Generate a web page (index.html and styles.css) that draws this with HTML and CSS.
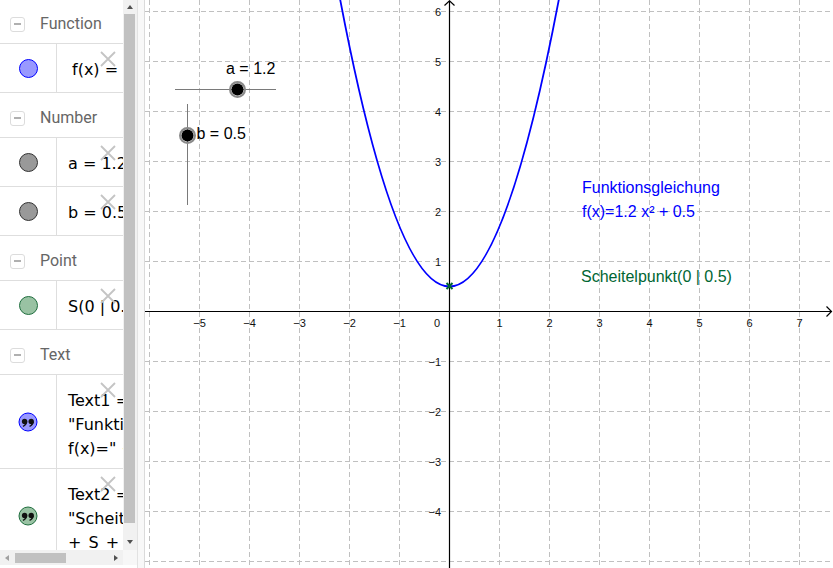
FILE: index.html
```html
<!DOCTYPE html>
<html lang="de">
<head>
<meta charset="utf-8">
<title>GeoGebra</title>
<link rel="stylesheet" href="styles.css">
</head>
<body>
<div class="app">
  <div class="algebra">
    <div class="av-top">
      <div class="av-list">
        <div class="hdr first"><span class="toggle"><span class="minus"></span></span><span class="hdr-text">Function</span></div>
        <div class="item">
          <div class="marble-cell"><span class="marble m-blue"></span></div>
          <div class="expr fx">f(x) = 1.2x² + 0.5</div>
          <svg class="del" viewBox="0 0 16 16"><path d="M1 1L15 15M15 1L1 15"/></svg>
        </div>
        <div class="hdr"><span class="toggle"><span class="minus"></span></span><span class="hdr-text">Number</span></div>
        <div class="item">
          <div class="marble-cell"><span class="marble m-gray"></span></div>
          <div class="expr">a = 1.2</div>
          <svg class="del" viewBox="0 0 16 16"><path d="M1 1L15 15M15 1L1 15"/></svg>
        </div>
        <div class="item">
          <div class="marble-cell"><span class="marble m-gray"></span></div>
          <div class="expr">b = 0.5</div>
          <svg class="del" viewBox="0 0 16 16"><path d="M1 1L15 15M15 1L1 15"/></svg>
        </div>
        <div class="hdr"><span class="toggle"><span class="minus"></span></span><span class="hdr-text">Point</span></div>
        <div class="item">
          <div class="marble-cell"><span class="marble m-green"></span></div>
          <div class="expr">S(0 | 0.5)</div>
          <svg class="del" viewBox="0 0 16 16"><path d="M1 1L15 15M15 1L1 15"/></svg>
        </div>
        <div class="hdr"><span class="toggle"><span class="minus"></span></span><span class="hdr-text">Text</span></div>
        <div class="item tall">
          <div class="marble-cell">
            <svg class="qmarble" viewBox="0 0 20 20"><circle class="q-blue" cx="10" cy="10" r="9"/><g class="quotes"><circle cx="6.6" cy="9.4" r="2.7"/><path d="M9.3 9.6C9.2 12.2 7.8 14 5.2 14.9L4.7 13.8C6.2 13.1 7 12.1 7.1 10.8Z"/><circle cx="13.2" cy="9.4" r="2.7"/><path d="M15.9 9.6C15.8 12.2 14.4 14 11.8 14.9L11.3 13.8C12.8 13.1 13.6 12.1 13.7 10.8Z"/></g></svg>
          </div>
          <div class="expr">
            <div>Text1 =</div>
            <div>"Funktionsgleichung</div>
            <div>f(x)=" + f</div>
          </div>
          <svg class="del" viewBox="0 0 16 16"><path d="M1 1L15 15M15 1L1 15"/></svg>
        </div>
        <div class="item tall">
          <div class="marble-cell">
            <svg class="qmarble" viewBox="0 0 20 20"><circle class="q-green" cx="10" cy="10" r="9"/><g class="quotes"><circle cx="6.6" cy="9.4" r="2.7"/><path d="M9.3 9.6C9.2 12.2 7.8 14 5.2 14.9L4.7 13.8C6.2 13.1 7 12.1 7.1 10.8Z"/><circle cx="13.2" cy="9.4" r="2.7"/><path d="M15.9 9.6C15.8 12.2 14.4 14 11.8 14.9L11.3 13.8C12.8 13.1 13.6 12.1 13.7 10.8Z"/></g></svg>
          </div>
          <div class="expr">
            <div>Text2 =</div>
            <div>"Scheitelpunkt"</div>
            <div class="wide">+ S + ""</div>
          </div>
          <svg class="del" viewBox="0 0 16 16"><path d="M1 1L15 15M15 1L1 15"/></svg>
        </div>
      </div>
      <div class="vscroll">
        <div class="sbtn"><span class="tri tri-up"></span></div>
        <div class="vtrack"><div class="vthumb"></div></div>
        <div class="sbtn"><span class="tri tri-down"></span></div>
      </div>
    </div>
    <div class="av-bottom">
      <div class="hscroll">
        <div class="sbtn hbtn"><span class="tri tri-left"></span></div>
        <div class="htrack"><div class="hthumb"></div></div>
        <div class="sbtn hbtn"><span class="tri tri-right"></span></div>
      </div>
      <div class="corner"></div>
    </div>
  </div>
  <div class="splitter"></div>
  <div class="graphics">
    <svg class="plot" width="688" height="568" viewBox="0 0 688 568">
      <path class="grid" d="M4.5 0V568M54.5 0V568M104.5 0V568M154.5 0V568M204.5 0V568M254.5 0V568M354.5 0V568M404.5 0V568M454.5 0V568M504.5 0V568M554.5 0V568M604.5 0V568M654.5 0V568M0 11.5H688M0 61.5H688M0 111.5H688M0 161.5H688M0 211.5H688M0 261.5H688M0 361.5H688M0 411.5H688M0 461.5H688M0 511.5H688M0 561.5H688"/>
      <path class="axis" d="M0 311.5H687M304.5 1V568"/>
      <path class="axis" d="M299.5 5.5L304.5 0.8L309.5 5.5M681.5 306.5L686.5 311.5L681.5 316.5"/>
      <g class="ticklabels xl">
        <text x="54.5" y="327">−5</text>
        <text x="104.5" y="327">−4</text>
        <text x="154.5" y="327">−3</text>
        <text x="204.5" y="327">−2</text>
        <text x="254.5" y="327">−1</text>
        <text x="292" y="327">0</text>
        <text x="354.5" y="327">1</text>
        <text x="404.5" y="327">2</text>
        <text x="454.5" y="327">3</text>
        <text x="504.5" y="327">4</text>
        <text x="554.5" y="327">5</text>
        <text x="604.5" y="327">6</text>
        <text x="654.5" y="327">7</text>
      </g>
      <g class="ticklabels yl">
        <text x="296" y="15.5">6</text>
        <text x="296" y="65.5">5</text>
        <text x="296" y="115.5">4</text>
        <text x="296" y="165.5">3</text>
        <text x="296" y="215.5">2</text>
        <text x="296" y="265.5">1</text>
        <text x="296" y="365.5">−1</text>
        <text x="296" y="415.5">−2</text>
        <text x="296" y="465.5">−3</text>
        <text x="296" y="515.5">−4</text>
      </g>
      <path class="curve" d="M194.5 -3.9Q304.5 576.9 414.5 -3.9"/>
      <path class="vertex" d="M301.5 283L307.5 289M307.5 283L301.5 289"/>
      <path class="slider-line" d="M30 89.5H131M42.5 104V205"/>
      <circle class="knob-halo" cx="92.5" cy="89.5" r="7.4"/>
      <circle class="knob" cx="92.5" cy="89.5" r="6"/>
      <circle class="knob-halo" cx="42.5" cy="135.5" r="7.4"/>
      <circle class="knob" cx="42.5" cy="135.5" r="6"/>
      <text class="gtext" x="81" y="74">a = 1.2</text>
      <text class="gtext" x="51.5" y="139">b = 0.5</text>
      <text class="gtext blue" x="437" y="193">Funktionsgleichung</text>
      <text class="gtext blue" x="437" y="217">f(x)=1.2 x² + 0.5</text>
      <text class="gtext green" x="436" y="282">Scheitelpunkt(0 | 0.5)</text>
    </svg>
  </div>
</div>
</body>
</html>
```

FILE: styles.css
```css
* { box-sizing: border-box; }
html, body { margin: 0; padding: 0; }
body {
  width: 833px;
  height: 568px;
  overflow: hidden;
  background: #fff;
  font-family: "DejaVu Sans", sans-serif;
}
.app { display: flex; height: 568px; }

/* Algebra view */
.algebra { width: 137px; flex: none; display: flex; flex-direction: column; background: #fff; }
.av-top { display: flex; height: 550px; flex: none; }
.av-list { width: 123px; flex: none; overflow: hidden; }

.hdr {
  height: 45px;
  display: flex;
  align-items: center;
  padding-top: 6px;
  border-bottom: 1px solid #dedede;
  white-space: nowrap;
}
.hdr.first { margin-top: -1px; }
.toggle {
  flex: none;
  width: 15px;
  height: 15px;
  margin-left: 10px;
  border: 1px solid #dcdcdc;
  border-radius: 3px;
  display: flex;
  align-items: center;
  justify-content: center;
}
.minus { width: 7px; height: 1.5px; background: #b0b0b0; }
.hdr-text {
  margin-left: 15px;
  font-family: Roboto, "Liberation Sans", sans-serif;
  font-size: 16px;
  line-height: 20px;
  color: #666;
}

.item {
  position: relative;
  display: flex;
  border-bottom: 1px solid #dedede;
}
.marble-cell {
  width: 57px;
  flex: none;
  border-right: 1px solid #dedede;
  display: flex;
  align-items: center;
  justify-content: center;
}
.marble {
  width: 19px;
  height: 19px;
  border-radius: 50%;
  border: 1px solid #333;
}
.m-blue { background: #9999ff; border-color: #0000ff; }
.m-gray { background: #999999; border-color: #333333; }
.m-green { background: #99c2a3; border-color: #1f6e3e; }
.qmarble { width: 20px; height: 20px; display: block; }
.q-blue { fill: #9999ff; stroke: #0000ff; stroke-width: 1; }
.q-green { fill: #99c2a3; stroke: #1f6e3e; stroke-width: 1; }
.quotes { fill: #111; }

.expr {
  padding: 14px 0 10px 11px;
  font-family: "DejaVu Sans", sans-serif;
  font-size: 16px;
  line-height: 24px;
  color: #000;
  white-space: nowrap;
}
.expr.fx { padding-left: 15px; }
.expr .wide { word-spacing: 2px; }
.item.tall .expr { padding-bottom: 7px; }
.del {
  position: absolute;
  top: 7px;
  left: 100px;
  width: 16px;
  height: 16px;
  fill: none;
  stroke: #c4c4c4;
  stroke-width: 1.8;
}

/* Scrollbars */
.vscroll {
  width: 14px;
  flex: none;
  background: #f1f1f1;
  display: flex;
  flex-direction: column;
}
.sbtn {
  flex: none;
  width: 14px;
  height: 14px;
  display: flex;
  align-items: center;
  justify-content: center;
}
.vtrack { flex: 1; padding: 0 2px 0 1px; }
.vthumb { height: 509px; background: #c1c1c1; }
.tri { width: 0; height: 0; display: block; }
.tri-up { border-left: 3.5px solid transparent; border-right: 3.5px solid transparent; border-bottom: 4px solid #505050; }
.tri-down { border-left: 3.5px solid transparent; border-right: 3.5px solid transparent; border-top: 4px solid #505050; margin-top: -3px; }
.tri-left { border-top: 3.5px solid transparent; border-bottom: 3.5px solid transparent; border-right: 4px solid #a0a0a0; }
.tri-right { border-top: 3.5px solid transparent; border-bottom: 3.5px solid transparent; border-left: 4px solid #505050; }

.av-bottom { display: flex; height: 15px; flex: none; }
.hscroll { width: 123px; flex: none; background: #f1f1f1; display: flex; }
.hbtn { height: 15px; }
.htrack { flex: 1; padding-top: 3px; }
.hthumb { width: 51px; height: 10px; margin-left: 1px; background: #c1c1c1; }
.corner { width: 14px; background: #f7f7f7; }

.splitter {
  width: 8px;
  flex: none;
  background: #f8f8f8;
  border-left: 1px solid #e2e2e2;
  border-right: 1px solid #dadada;
}

/* Graphics view */
.graphics { flex: 1; overflow: hidden; }
.plot { display: block; }
.grid { fill: none; stroke: #c0c0c0; stroke-width: 1; stroke-dasharray: 5 3; }
.axis { fill: none; stroke: #000; stroke-width: 1.2; }
.ticklabels { font-family: "Liberation Sans", Arial, sans-serif; font-size: 11px; fill: #111; }
.xl { text-anchor: middle; }
.yl { text-anchor: end; }
.curve { fill: none; stroke: #0000ff; stroke-width: 1.8; }
.vertex { fill: none; stroke: #006633; stroke-width: 2; }
.slider-line { fill: none; stroke: #7a7a7a; stroke-width: 1; }
.knob-halo { fill: none; stroke: #8a8a8a; stroke-width: 2.2; }
.knob { fill: #000; }
.gtext { font-family: "Liberation Sans", Arial, sans-serif; font-size: 16px; fill: #000; }
.gtext.blue { fill: #0000ff; }
.gtext.green { fill: #006633; }
```
